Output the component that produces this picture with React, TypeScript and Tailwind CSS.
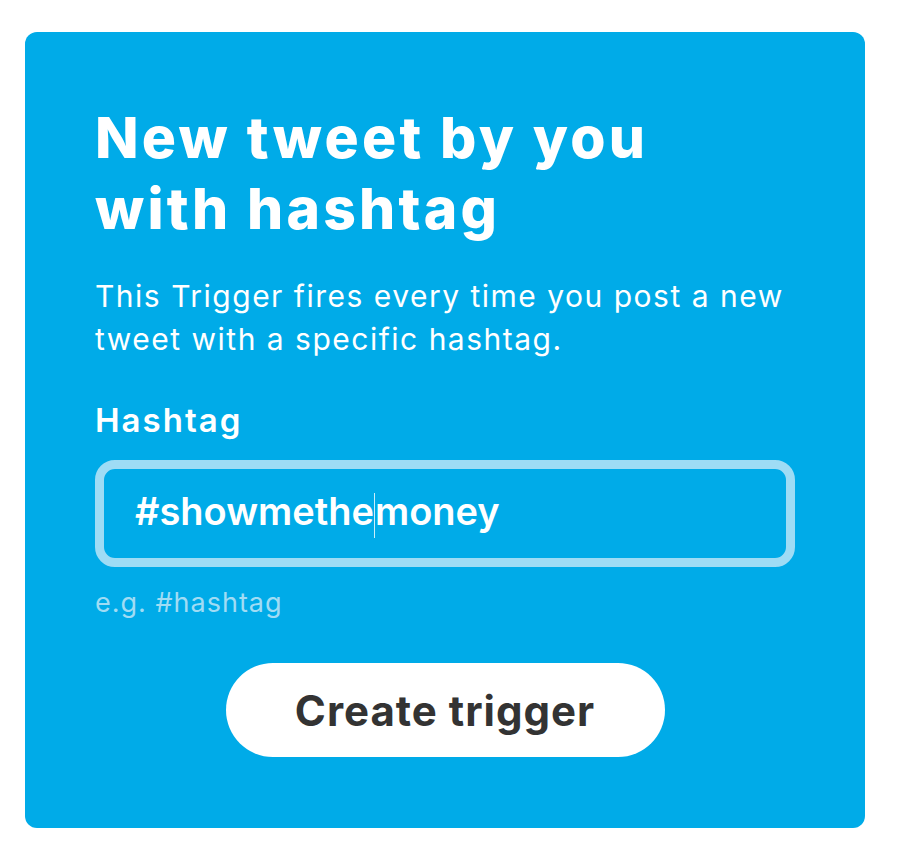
export default function App() {
  return (
    <div className="min-h-screen bg-white pt-8 pl-[25px]" style={{ fontFamily: "Inter, 'Open Sans', sans-serif" }}>
      <div className="w-[840px] h-[796px] rounded-xl bg-[#00abe8] px-[70px] pt-[70px]">
        {/* Title */}
        <h1 className="text-[57px] leading-[71px] font-extrabold tracking-[3.2px] text-white">
          New tweet by you
          <br />
          with hashtag
        </h1>

        {/* Description */}
        <p className="mt-[31px] text-[30px] leading-[43px] tracking-[1.5px] text-white">
          This Trigger fires every time you post a new tweet with a specific hashtag.
        </p>

        {/* Field */}
        <div className="mt-[39px] text-[33px] leading-[40px] font-semibold tracking-[2px] text-white">Hashtag</div>
        <div className="mt-[20px] h-[107px] rounded-[20px] border-[9px] border-[#9edcf5] flex items-center pl-[31px]">
          <span className="text-[38px] leading-[44px] font-semibold text-white">
            #showmethe
            <span className="inline-block w-px h-[45px] bg-white/80 align-middle" />
            money
          </span>
        </div>
        <div className="mt-[20px] text-[27px] leading-[32px] tracking-[1px] text-[#a0dcf4]">e.g. #hashtag</div>

        {/* Button */}
        <div className="mt-[44px] flex justify-center">
          <button className="w-[439px] h-[94px] rounded-full bg-white text-[42px] font-bold tracking-[1px] text-[#333]">
            Create trigger
          </button>
        </div>
      </div>
    </div>
  );
}
